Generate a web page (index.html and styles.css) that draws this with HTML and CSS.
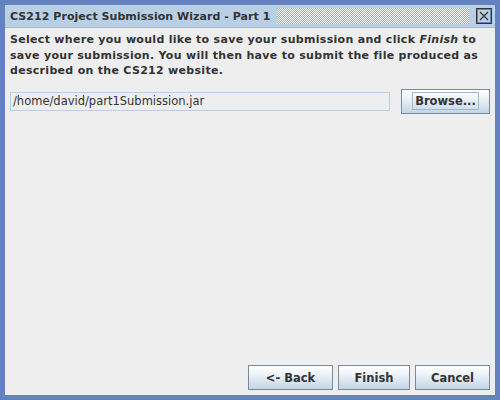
FILE: index.html
```html
<!DOCTYPE html>
<html>
<head>
<meta charset="utf-8">
<link rel="stylesheet" href="styles.css">
</head>
<body>
<div class="window">
  <div class="titlebar">
    <span class="title">CS212 Project Submission Wizard - Part 1</span>
    <span class="grip"></span>
    <span class="close">
      <svg width="16" height="16" viewBox="0 0 16 16">
        <rect x="0.5" y="0.5" width="15" height="15" fill="#ffffff" stroke="#333333"/>
        <rect x="1.5" y="1.5" width="13" height="13" fill="#b8cfe5" stroke="#6382bf"/>
        <path d="M4 4 L12 12 M12 4 L4 12" stroke="#333333" stroke-width="1.2"/>
      </svg>
    </span>
  </div>
  <div class="content">
    <p class="intro">Select where you would like to save your submission and click <i>Finish</i> to save your submission. You will then have to submit the file produced as described on the CS212 website.</p>
    <div class="filerow">
      <div class="field">/home/david/part1Submission.jar</div>
      <button class="btn browse"><span class="focus">Browse...</span></button>
    </div>
    <div class="spacer"></div>
    <div class="buttons">
      <button class="btn back">&lt;- Back</button>
      <button class="btn finish">Finish</button>
      <button class="btn cancel">Cancel</button>
    </div>
  </div>
</div>
</body>
</html>
```
FILE: styles.css
```css
html, body {
  margin: 0;
  padding: 0;
  background: #6382bf;
}
.window {
  width: 500px;
  height: 400px;
  box-sizing: border-box;
  padding: 5px;
  display: flex;
  flex-direction: column;
  background: #6382bf;
  font-family: "DejaVu Sans", sans-serif;
  color: #333333;
}
.titlebar {
  height: 22px;
  background: #b8cfe5;
  border-bottom: 1px solid #a3b8cc;
  display: flex;
  align-items: center;
  padding: 0 3px 0 5px;
  gap: 7px;
}
.title {
  font-weight: bold;
  font-size: 11px;
  letter-spacing: 0.05px;
  white-space: nowrap;
}
.grip {
  flex: 1;
  height: 16px;
  background: repeating-conic-gradient(#ffffff 0 25%, #8fa9d2 0 50%) 0 0 / 2px 2px;
}
.close {
  width: 16px;
  height: 16px;
  display: block;
}
.close svg { display: block; }
.content {
  flex: 1;
  background: #eeeeee;
  display: flex;
  flex-direction: column;
  padding: 4px 5px 5px 5px;
}
.intro {
  margin: 0;
  font-weight: bold;
  font-size: 11px;
  letter-spacing: 0.3px;
  line-height: 15.5px;
  padding-right: 8px;
}
.filerow {
  display: flex;
  align-items: center;
  margin-top: 10px;
  gap: 11px;
}
.field {
  flex: 1;
  height: 17px;
  border: 1px solid #b8cfe5;
  background: #eeeeee;
  font-size: 11.5px;
  line-height: 17px;
  padding-left: 2px;
}
.btn {
  font-family: "DejaVu Sans", sans-serif;
  font-weight: bold;
  font-size: 11.5px;
  color: #333333;
  border: 1px solid #7a8a99;
  background: linear-gradient(to bottom, #ffffff 0%, #eef3f8 35%, #c3d5e8 100%);
  height: 25px;
  padding: 0;
  margin: 0;
}
.browse {
  width: 89px;
}
.focus {
  border: 1px solid #a3b8cc;
  padding: 1px 2px;
}
.spacer { flex: 1; }
.buttons {
  display: flex;
  justify-content: flex-end;
  gap: 5px;
}
.back { width: 85px; }
.finish { width: 72px; }
.cancel { width: 75px; }
```
